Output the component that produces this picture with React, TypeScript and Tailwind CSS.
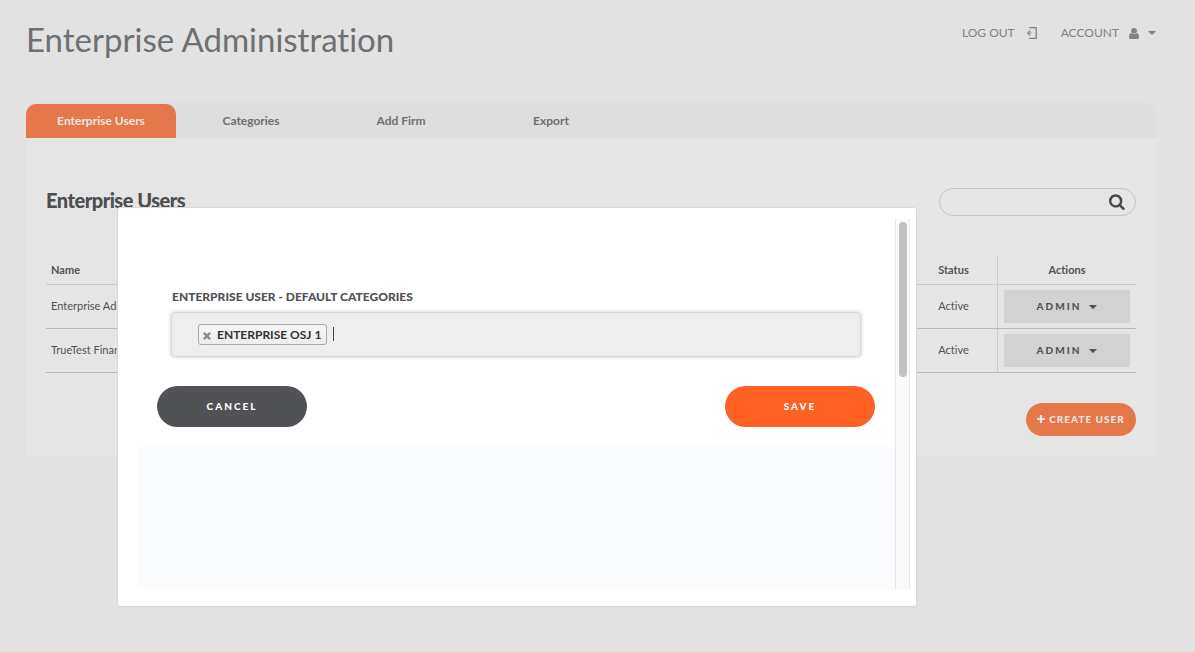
import { useState } from "react";

const users = [
  { name: "Enterprise Admin", status: "Active" },
  { name: "TrueTest Financial", status: "Active" },
];

const tabs = ["Enterprise Users", "Categories", "Add Firm", "Export"];

function Caret({ className }: { className: string }) {
  return (
    <svg viewBox="0 0 8 4" className={className} fill="currentColor" aria-hidden="true">
      <path d="M0.6 0H7.4Q8 0 7.6 0.5L4.4 3.8Q4 4.2 3.6 3.8L0.4 0.5Q0 0 0.6 0Z" />
    </svg>
  );
}

function SearchIcon() {
  return (
    <svg viewBox="0 0 1792 1792" className="size-[17px]" fill="currentColor" aria-hidden="true">
      <path d="M1152 832q0-185-131.500-316.500t-316.500-131.500-316.500 131.500-131.500 316.500 131.500 316.500 316.500 131.500 316.500-131.500 131.500-316.500zm512 832q0 52-38 90t-90 38q-54 0-90-38l-343-342q-179 124-399 124-143 0-273.500-55.500t-225-150-150-225-55.500-273.500 55.500-273.500 150-225 225-150 273.500-55.500 273.500 55.500 225 150 150 225 55.500 273.500q0 220-124 399l343 343q37 37 37 90z" />
    </svg>
  );
}

function UserIcon() {
  return (
    <svg viewBox="256 128 1280 1536" className="h-[11px] w-[10px]" preserveAspectRatio="none" fill="currentColor" aria-hidden="true">
      <path d="M1536 1399q0 109-62.500 187t-150.500 78h-854q-88 0-150.500-78t-62.500-187q0-85 8.500-160.500t31.500-152 58.500-131 94-89 134.500-34.500q131 128 313 128t313-128q76 0 134.500 34.500t94 89 58.500 131 31.500 152 8.500 160.500zm-256-887q0 159-112.500 271.500t-271.500 112.500-271.500-112.500-112.500-271.500 112.500-271.500 271.500-112.500 271.500 112.500 112.500 271.500z" />
    </svg>
  );
}

function LogOutIcon() {
  return (
    <svg viewBox="0 0 10 12" className="h-3 w-[10px]" fill="none" stroke="currentColor" aria-hidden="true">
      <path d="M2.200 0.600H9.200V11.400H2.200" strokeWidth="1.300" />
      <path d="M3.200 3.800L1 6L3.200 8.200" strokeWidth="1.400" />
      <path d="M3.400 6H4.600" strokeWidth="1.200" />
    </svg>
  );
}

function PlusIcon() {
  return (
    <svg viewBox="192 128 1408 1408" className="mb-px size-2" fill="currentColor" aria-hidden="true">
      <path d="M1600 736v192q0 40-28 68t-68 28h-416v416q0 40-28 68t-68 28h-192q-40 0-68-28t-28-68v-416h-416q-40 0-68-28t-28-68v-192q0-40 28-68t68-28h416v-416q0-40 28-68t68-28h192q40 0 68 28t28 68v416h416q40 0 68 28t28 68z" />
    </svg>
  );
}

function CloseIcon() {
  return (
    <svg viewBox="0 0 8 8" className="size-2" fill="none" stroke="currentColor" strokeWidth="2.400" aria-hidden="true">
      <path d="M0.900 0.900L7.100 7.100M7.100 0.900L0.900 7.100" />
    </svg>
  );
}

function CategoriesDialog() {
  const [categories, setCategories] = useState(["ENTERPRISE OSJ 1"]);
  return (
    <div
      role="dialog"
      aria-modal="true"
      aria-labelledby="categories-label"
      className="absolute top-[207px] left-[117px] w-[800px] max-w-full rounded-[3px] border border-[#d9d9d9] bg-white pt-[11px] pr-1.5 pb-[17px] pl-[19px]"
    >
      <div className="flex">
        <div className="min-w-0 flex-1">
          <form className="px-5 pt-[69px] pb-5" onSubmit={(e) => e.preventDefault()}>
            <div className="px-3.5">
              <label
                id="categories-label"
                htmlFor="categories"
                className="block px-px text-xs leading-[18px] font-black text-[#515256]"
              >
                ENTERPRISE USER - DEFAULT CATEGORIES
              </label>
              <div className="mt-1.5 flex h-[45px] items-center rounded-[4px] border border-[#d9d9d9] bg-[#eeeeee] px-[26px] shadow-[0_0_4px_rgba(0,0,0,0.2)]">
                {categories.map((c) => (
                  <span
                    key={c}
                    className="flex h-[21px] items-center gap-1.5 rounded-[3px] border border-[#aaaaaa] bg-linear-to-b from-[#f4f4f4] from-20% via-[#f0f0f0] to-[#eeeeee] pr-[5px] pl-1 text-xs font-bold text-[#333333]"
                  >
                    <button
                      type="button"
                      aria-label={`Remove ${c}`}
                      className="pt-0.5 text-[#8a8a8a]"
                      onClick={() => setCategories(categories.filter((x) => x !== c))}
                    >
                      <CloseIcon />
                    </button>
                    {c}
                  </span>
                ))}
                <span className="mb-0.5 ml-1.5 h-3.5 w-px bg-[#444444]" />
                <input id="categories" type="text" className="h-6 min-w-0 flex-1 bg-transparent text-xs outline-none" />
              </div>
            </div>
            <div className="mt-[29px] flex justify-between text-[10px] font-black tracking-[2px] text-white">
              <button type="button" className="h-[41px] w-[150px] rounded-full bg-[#515256]">
                CANCEL
              </button>
              <button type="submit" className="h-[41px] w-[150px] rounded-full bg-[#ff6122]">
                SAVE
              </button>
            </div>
          </form>
          <div className="h-[142px] bg-[#fafbfd]" />
        </div>
        <div className="w-[15px] border-x border-[#e7e7e7] bg-[#fafafa] px-[3px] pt-[3px]">
          <div className="h-[155px] w-2 rounded-full bg-[#c1c1c1]" />
        </div>
      </div>
    </div>
  );
}

export default function App() {
  return (
    <div className="relative min-h-screen bg-[#e2e2e2] pr-[39px] pl-[26px] font-[Lato,'Liberation_Sans',sans-serif] text-[#515254] [font-variant-ligatures:none]">
      <header className="flex h-[103px] items-start justify-between pt-[19px]">
        <h1 className="text-[33px] leading-10 text-[#6e6f71]">Enterprise Administration</h1>
        <nav aria-label="Account" className="flex items-center gap-6 pt-1 text-xs leading-5 text-[#838383]">
          <a href="#logout" className="flex items-center gap-3">
            LOG OUT
            <LogOutIcon />
          </a>
          <button type="button" className="flex items-center gap-[9px]">
            <span className="pr-px">ACCOUNT</span>
            <UserIcon />
            <Caret className="h-1 w-2" />
          </button>
        </nav>
      </header>

      <nav aria-label="Sections" className="flex rounded-t-[10px] bg-[#dedede] pt-px text-xs font-bold text-[#6f6f70]">
        {tabs.map((tab, i) => (
          <a
            key={tab}
            href="#section"
            aria-current={i === 0 ? "page" : undefined}
            className={
              i === 0
                ? "flex h-[34px] w-[150px] items-center justify-center rounded-t-[10px] bg-[#e5774b] text-[#ebe5e2]"
                : "flex h-[34px] w-[150px] items-center justify-center"
            }
          >
            {tab}
          </a>
        ))}
      </nav>

      <main className="bg-[#e5e5e5] px-5 pt-[50px] pb-5">
        <div className="flex items-start justify-between">
          <h2 className="text-xl leading-6 font-black tracking-tight text-[#4c4e51]">Enterprise Users</h2>
          <div className="flex h-7 w-[197px] items-center rounded-full border border-[#c3c3c3] pr-[9px] pl-4 text-[#47484c]">
            <input type="search" aria-label="Search users" className="min-w-0 flex-1 bg-transparent text-xs outline-none" />
            <button type="button" aria-label="Search" className="pb-0.5">
              <SearchIcon />
            </button>
          </div>
        </div>

        <table className="mt-10 w-full table-fixed border-separate border-spacing-0 text-[11px]">
          <thead>
            <tr className="h-[29px] font-bold">
              <th scope="col" className="border-b border-[#cbcbcb] px-[5px] text-left">Name</th>
              <th scope="col" className="w-[88px] border-r border-b border-[#cbcbcb]">Status</th>
              <th scope="col" className="w-[138px] border-b border-[#cbcbcb]">Actions</th>
            </tr>
          </thead>
          <tbody>
            {users.map((user) => (
              <tr key={user.name} className="h-11">
                <td className="border-b border-[#b9b9b9] px-[5px]">{user.name}</td>
                <td className="border-r border-b border-r-[#cbcbcb] border-b-[#b9b9b9] text-center">{user.status}</td>
                <td className="border-b border-[#b9b9b9] px-1.5">
                  <button
                    type="button"
                    className="flex h-[33px] w-full items-center justify-center gap-2 bg-[#d2d2d2] text-[10px] font-black tracking-[2px]"
                  >
                    ADMIN
                    <Caret className="h-1 w-2" />
                  </button>
                </td>
              </tr>
            ))}
          </tbody>
        </table>

        <div className="mt-[30px] flex justify-end">
          <button
            type="button"
            className="flex h-[33px] w-[110px] items-center justify-center gap-1 rounded-full bg-[#e5774b] text-[10px] font-black tracking-[1px] text-[#ebe5e2]"
          >
            <PlusIcon />
            CREATE USER
          </button>
        </div>
      </main>

      <CategoriesDialog />
    </div>
  );
}
